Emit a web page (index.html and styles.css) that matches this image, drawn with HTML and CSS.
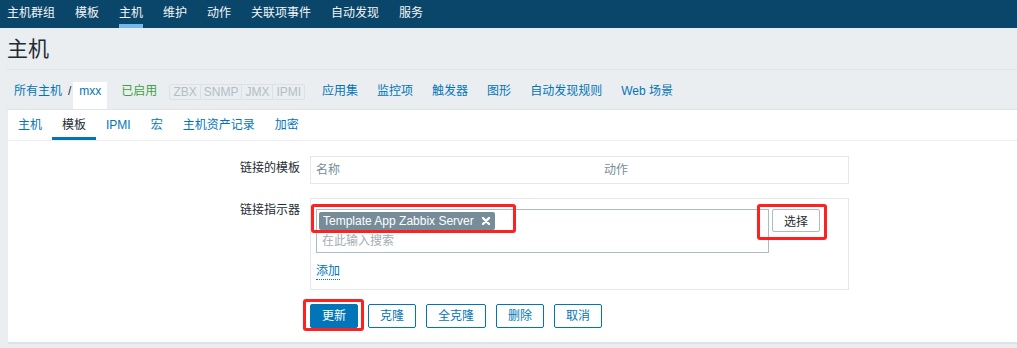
FILE: index.html
```html
<!DOCTYPE html>
<html lang="zh-CN">
<head>
    <meta charset="UTF-8">
    <title>主机</title>
    <link rel="stylesheet" href="styles.css">
</head>
<body>
    <nav class="top-nav">
        <a href="#">主机群组</a>
        <a href="#">模板</a>
        <a href="#" class="selected">主机</a>
        <a href="#">维护</a>
        <a href="#">动作</a>
        <a href="#">关联项事件</a>
        <a href="#">自动发现</a>
        <a href="#">服务</a>
    </nav>

    <main class="wrapper">
        <h1 class="page-title">主机</h1>

        <div class="host-nav">
            <a href="#" class="crumb">所有主机</a>
            <span class="sep">/</span>
            <span class="crumb-current">mxx</span>
            <span class="status-on">已启用</span>
            <span class="status-group">
                <span>ZBX</span><span>SNMP</span><span>JMX</span><span>IPMI</span>
            </span>
            <a href="#" class="host-link">应用集</a>
            <a href="#" class="host-link">监控项</a>
            <a href="#" class="host-link">触发器</a>
            <a href="#" class="host-link">图形</a>
            <a href="#" class="host-link">自动发现规则</a>
            <a href="#" class="host-link">Web 场景</a>
        </div>

        <div class="panel">
            <ul class="tabs">
                <li><a href="#">主机</a></li>
                <li class="active"><a href="#">模板</a></li>
                <li><a href="#">IPMI</a></li>
                <li><a href="#">宏</a></li>
                <li><a href="#">主机资产记录</a></li>
                <li><a href="#">加密</a></li>
            </ul>

            <form class="form">
                <label class="form-label">链接的模板</label>
                <div class="form-field">
                    <div class="linked-table">
                        <span>名称</span>
                        <span>动作</span>
                    </div>
                </div>

                <label class="form-label">链接指示器</label>
                <div class="form-field">
                    <div class="link-box">
                        <div class="ms-row">
                            <div class="multiselect">
                                <span class="tag">Template App Zabbix Server
                                    <svg class="tag-remove" viewBox="0 0 10 10" width="10" height="10">
                                        <path d="M2 2 L8 8 M8 2 L2 8" stroke="#fff" stroke-width="2.4" stroke-linecap="round"/>
                                    </svg>
                                </span>
                                <input type="text" class="ms-input" placeholder="在此输入搜索">
                                <span class="mark mark-tag"></span>
                            </div>
                            <button type="button" class="btn-grey">选择<span class="mark mark-select"></span></button>
                        </div>
                        <a href="#" class="link-add">添加</a>
                    </div>
                </div>

                <div></div>
                <div class="form-buttons">
                    <button type="submit" class="btn btn-primary">更新<span class="mark mark-update"></span></button>
                    <button type="button" class="btn">克隆</button>
                    <button type="button" class="btn">全克隆</button>
                    <button type="button" class="btn">删除</button>
                    <button type="button" class="btn">取消</button>
                </div>
            </form>
        </div>
    </main>
</body>
</html>
```

FILE: styles.css
```css
* {
    margin: 0;
    padding: 0;
    box-sizing: border-box;
}
body {
    font-family: "Liberation Sans", "Noto Sans CJK SC", sans-serif;
    font-size: 12px;
    color: #1f2c33;
    background: #ebeef0;
    overflow: hidden;
}
a {
    text-decoration: none;
    color: #0275b8;
}

/* top menu */
.top-nav {
    display: flex;
    gap: 20px;
    height: 28px;
    padding-left: 7px;
    background: #0a466a;
}
.top-nav a {
    position: relative;
    display: block;
    line-height: 27px;
    color: #f2f5f7;
}
.top-nav a.selected::after {
    content: "";
    position: absolute;
    left: 0;
    right: 0;
    bottom: 0;
    height: 4px;
    background: #74b9e7;
}

.wrapper {
    padding-left: 7px;
}
.page-title {
    height: 42px;
    padding-top: 1px;
    line-height: 40px;
    font-size: 21px;
    font-weight: normal;
    color: #1f2c33;
    border-bottom: 1px solid #dfe4e7;
}

/* host navigation */
.host-nav {
    display: flex;
    align-items: flex-start;
    height: 40px;
    padding: 12px 0 0 7px;
    line-height: 18px;
    border-bottom: 1px solid #dfe4e7;
}
.sep {
    margin: 0 2px 0 6px;
    color: #1f2c33;
}
.crumb-current {
    height: 27px;
    padding: 0 6px;
    background: #fff;
    color: #0275b8;
}
.status-on {
    margin-left: 14px;
    color: #429e47;
}
.status-group {
    display: flex;
    margin: 2px 17px 0 12px;
}
.status-group span {
    line-height: 14px;
    padding: 0 3px;
    border: 1px solid #dbe1e5;
    margin-left: -1px;
    color: #b2bec5;
}
.status-group span:first-child {
    margin-left: 0;
    border-radius: 2px 0 0 2px;
}
.status-group span:last-child {
    border-radius: 0 2px 2px 0;
}
.host-link {
    margin-right: 19px;
}

/* panel */
.panel {
    margin-left: 1px;
    background: #fff;
    border-bottom: 2px solid #dde3e7;
}
.tabs {
    display: flex;
    list-style: none;
    height: 31px;
    border-bottom: 1px solid #ebeef0;
}
.tabs a {
    display: block;
    padding: 7px 10px;
    line-height: 16px;
}
.tabs .active a {
    color: #1f2c33;
    box-shadow: inset 0 -3px 0 #0275b8;
}

.form {
    display: grid;
    grid-template-columns: 292px 539px;
    column-gap: 10px;
    row-gap: 14px;
    padding: 15px 0 14px;
}
.form-label {
    padding-top: 4px;
    line-height: 16px;
    text-align: right;
}
.linked-table {
    display: grid;
    grid-template-columns: 288px 1fr;
    height: 28px;
    padding: 0 5px;
    line-height: 26px;
    color: #768d99;
    border: 1px solid #e4e8eb;
}
.link-box {
    padding: 10px 5px 9px;
    border: 1px solid #e4e8eb;
}
.ms-row {
    display: flex;
    align-items: flex-start;
}
.multiselect {
    position: relative;
    width: 453px;
    padding: 1px 2px;
    border: 1px solid #acbbc4;
}
.tag {
    display: inline-flex;
    align-items: center;
    gap: 7px;
    height: 18px;
    margin-top: 1px;
    padding: 0 4px;
    line-height: 18px;
    color: #fff;
    background: #768d99;
    border-radius: 2px;
}
.ms-input {
    display: block;
    width: 100%;
    height: 21px;
    padding: 0 3px;
    border: none;
    outline: none;
    font: inherit;
    color: #1f2c33;
}
.ms-input::placeholder {
    color: #a3aeb5;
}
.btn-grey {
    position: relative;
    width: 48px;
    height: 23px;
    margin-left: 3px;
    font: inherit;
    color: #1f2c33;
    background: #fff;
    border: 1px solid #acbbc4;
    border-radius: 2px;
}
.link-add {
    display: inline-block;
    margin-top: 10px;
    line-height: 16px;
    border-bottom: 1px dotted #0275b8;
}

.form-buttons {
    display: flex;
    gap: 10px;
}
.btn {
    position: relative;
    height: 24px;
    padding: 0 11px;
    font: inherit;
    line-height: 22px;
    color: #0275b8;
    background: #fff;
    border: 1px solid #0275b8;
    border-radius: 2px;
}
.btn-primary {
    color: #fff;
    background: #0275b8;
}

/* red annotation frames */
.mark {
    position: absolute;
    border: 3px solid #ff2020;
    border-radius: 3px;
    pointer-events: none;
}
.mark-tag {
    left: -6px;
    top: -6px;
    width: 205px;
    height: 29px;
}
.mark-select {
    left: -16px;
    top: -6px;
    width: 70px;
    height: 36px;
}
.mark-update {
    left: -8px;
    top: -6px;
    width: 61px;
    height: 32px;
}
```
